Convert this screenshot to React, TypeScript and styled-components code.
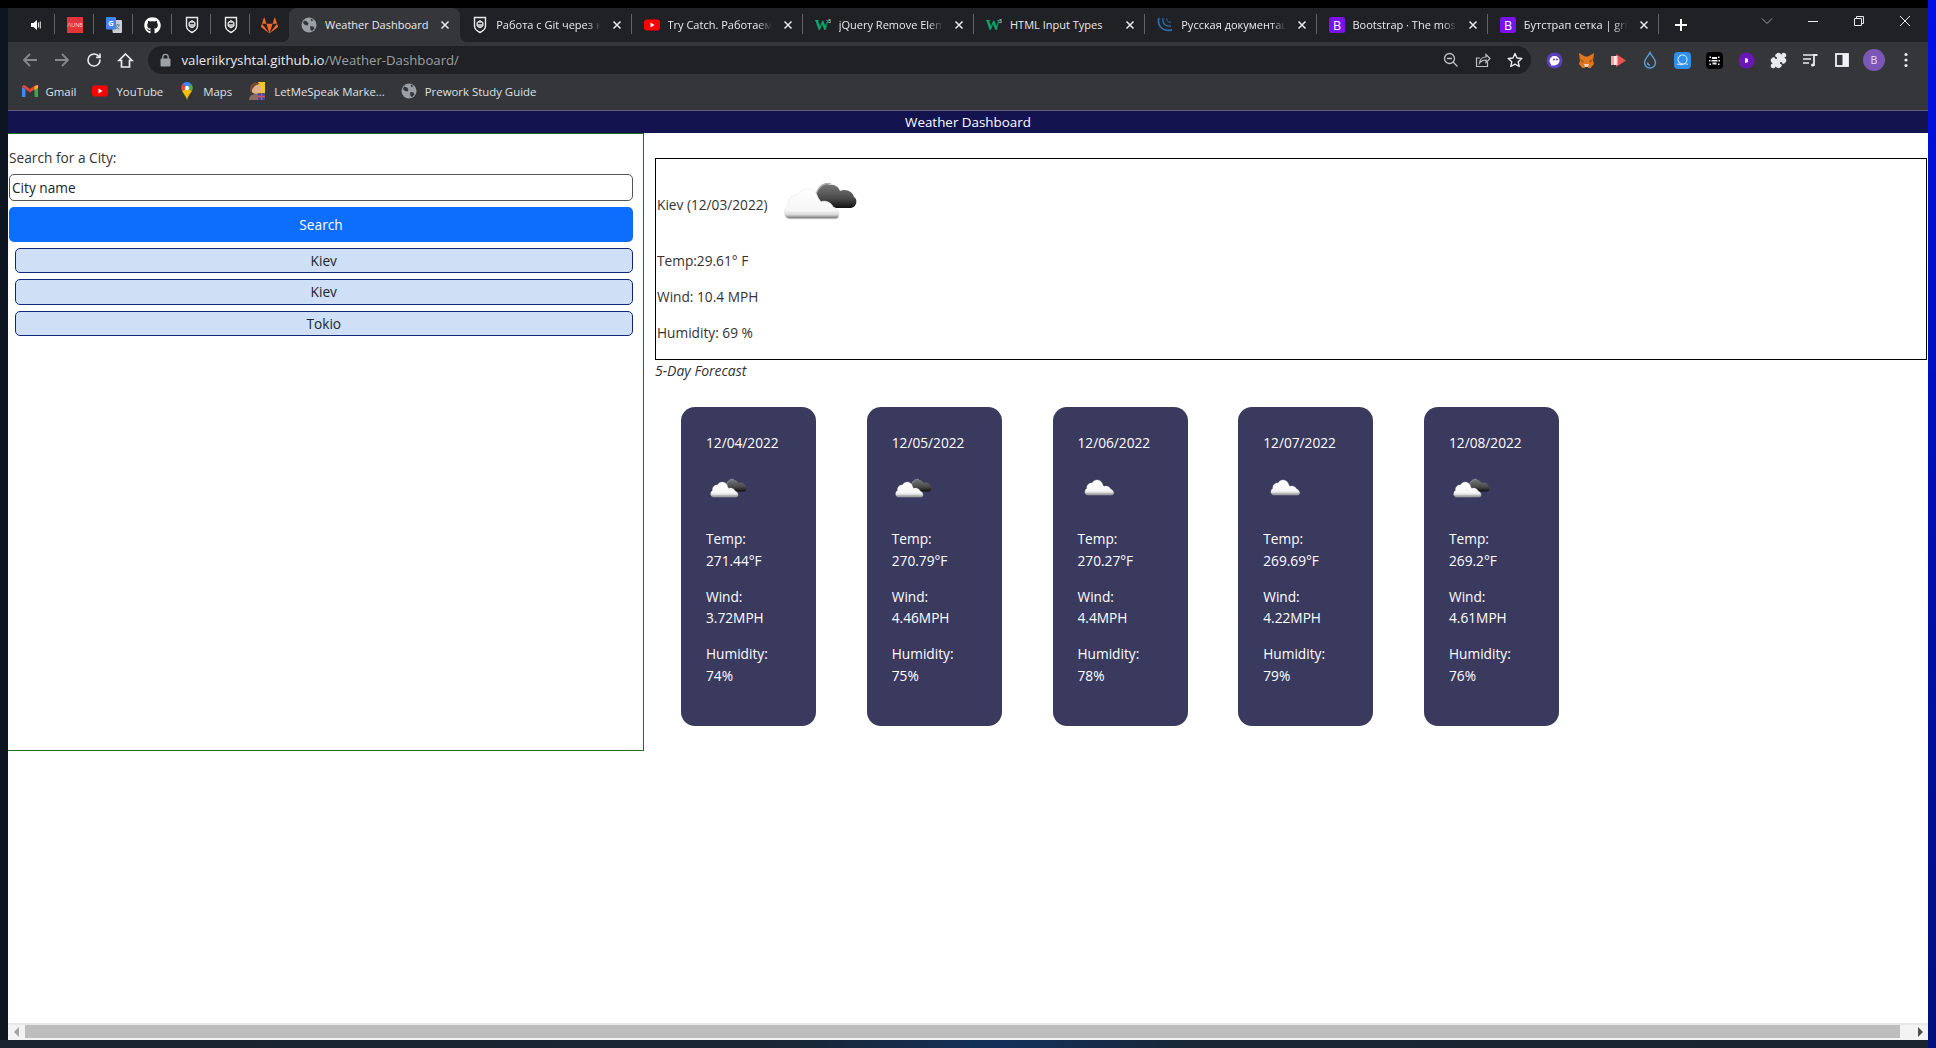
import React from "react";
import styled, { createGlobalStyle } from "styled-components";
import { RotateCw, Puzzle } from "lucide-react";
import { FaGithub, FaGitlab } from "react-icons/fa";

const Global = createGlobalStyle`
  html, body { margin: 0; padding: 0; overflow: hidden; }
  * { box-sizing: border-box; }
`;

const UI = `"Open Sans", "Noto Sans", Arial, sans-serif`;

const Desktop = styled.div`
  width: 1936px;
  height: 1048px;
  padding: 8px 8px 8px 8px;
  font-family: ${UI};
  background:
    linear-gradient(#0010e8, #00107c) right top / 8px 100% no-repeat,
    linear-gradient(#000, #000) left top / 100% 8px no-repeat,
    linear-gradient(90deg, #1a2430 0%, #1a2634 40%, #12305a 52%, #1a2634 62%, #1a2430 100%) left bottom / 100% 8px no-repeat,
    #0c1520;
`;

const Browser = styled.div`
  width: 1920px;
  height: 1032px;
  display: flex;
  flex-direction: column;
  background: #fff;
`;

const TabStrip = styled.div`
  height: 34px;
  flex: none;
  display: flex;
  align-items: stretch;
  background: #202124;
  padding-left: 8px;
  color: #e8eaed;
`;

const PinnedTab = styled.div<{ $sep?: boolean }>`
  position: relative;
  width: 39px;
  flex: none;
  display: flex;
  align-items: center;
  justify-content: center;
  &::after {
    content: "";
    position: absolute;
    right: 0;
    top: 6px;
    height: 20px;
    width: 1px;
    background: ${(p) => (p.$sep === false ? "transparent" : "#5f6368")};
  }
`;

const Tab = styled.div<{ $active?: boolean; $sep?: boolean }>`
  position: relative;
  width: 171.25px;
  flex: none;
  display: flex;
  align-items: center;
  padding: 0 7px 0 12px;
  gap: 8px;
  background: ${(p) => (p.$active ? "#35363a" : "transparent")};
  border-radius: ${(p) => (p.$active ? "8px 8px 0 0" : "0")};
  &::after {
    content: "";
    position: absolute;
    right: 0;
    top: 6px;
    height: 20px;
    width: 1px;
    background: ${(p) => (p.$sep ? "#5f6368" : "transparent")};
  }
`;

const TabFlare = styled.span<{ $side: "left" | "right" }>`
  position: absolute;
  bottom: 0;
  ${(p) => (p.$side === "left" ? "left: -6px;" : "right: -6px;")}
  width: 6px;
  height: 6px;
  background: radial-gradient(
    circle at ${(p) => (p.$side === "left" ? "0 0" : "100% 0")},
    transparent 5.5px,
    #35363a 6px
  );
`;

const TabTitle = styled.span<{ $fade?: boolean }>`
  flex: 1;
  min-width: 0;
  font-size: 11px;
  line-height: 15px;
  padding-bottom: 1px;
  white-space: nowrap;
  overflow: hidden;
  color: #e8eaed;
  ${(p) =>
    p.$fade
      ? `-webkit-mask-image: linear-gradient(90deg, #000 86%, transparent 100%);
         mask-image: linear-gradient(90deg, #000 86%, transparent 100%);`
      : ""}
`;

const TabClose = styled.svg`
  width: 16px;
  height: 16px;
  flex: none;
`;

const NewTab = styled.svg`
  width: 16px;
  height: 16px;
  align-self: center;
  flex: none;
  margin-left: 14px;
`;

const StripSpacer = styled.div`
  flex: 1;
`;

const WinButton = styled.div`
  width: 46px;
  flex: none;
  display: flex;
  justify-content: center;
  padding-top: 7px;
`;

const Toolbar = styled.div`
  height: 36px;
  flex: none;
  display: flex;
  align-items: center;
  padding: 0 6px 0 5.5px;
  background: #35363a;
`;

const ToolButton = styled.div`
  width: 32px;
  height: 28px;
  flex: none;
  display: flex;
  align-items: center;
  justify-content: center;
  color: #e8eaed;
`;

const Omnibox = styled.div`
  flex: 1;
  min-width: 0;
  height: 28px;
  margin: 0 7px 0 6px;
  border-radius: 14px;
  background: #202124;
  display: flex;
  align-items: center;
  padding-left: 10px;
`;

const LockBox = styled.div`
  width: 16px;
  flex: none;
  display: flex;
  justify-content: center;
  margin-right: 8px;
`;

const Url = styled.div`
  flex: 1;
  font-size: 13.2px;
  color: #9aa0a6;
  white-space: nowrap;
`;

const UrlHost = styled.span`
  color: #e8eaed;
`;

const Avatar = styled.div`
  width: 22px;
  height: 22px;
  border-radius: 50%;
  background: #7b58b8;
  color: #e8e0f5;
  font-size: 10.5px;
  display: flex;
  align-items: center;
  justify-content: center;
`;

const Bookmarks = styled.div`
  height: 33px;
  flex: none;
  display: flex;
  align-items: center;
  gap: 16px;
  padding: 0 0 6px 13.5px;
  background: #35363a;
  border-bottom: 1px solid #5c5e78;
`;

const Bookmark = styled.div`
  display: flex;
  align-items: center;
  gap: 8px;
  font-size: 11.4px;
  color: #dfe1e5;
  white-space: nowrap;
`;

const SiteHeader = styled.header`
  height: 22px;
  flex: none;
  background: #13134f;
  color: #fff;
  font-size: 13.4px;
  line-height: 22px;
  text-align: center;
`;

const Main = styled.main`
  flex: 1;
  min-height: 0;
  display: flex;
  align-items: flex-start;
  color: #212529;
  font-size: 13.7px;
`;

const SearchPanel = styled.aside`
  width: 636px;
  height: 618px;
  flex: none;
  border: 1px solid #1c6b1f;
  border-left: 0;
  padding: 13px 10px 0 1px;
`;

const SearchLabel = styled.div`
  line-height: 21.6px;
  margin-bottom: 5px;
  color: #333;
`;

const CityInput = styled.input`
  display: block;
  width: 100%;
  height: 27px;
  border: 1px solid #555;
  border-radius: 5px;
  padding: 0 2px;
  font: inherit;
  color: #212529;
  outline: none;
  &::placeholder {
    color: #212529;
    opacity: 1;
  }
`;

const SearchButton = styled.button`
  display: block;
  width: 100%;
  height: 35px;
  margin-top: 6px;
  border: 0;
  border-radius: 5px;
  background: #0d6efd;
  color: #fff;
  font: inherit;
`;

const HistoryList = styled.div`
  display: flex;
  flex-direction: column;
  gap: 6px;
  margin-top: 6px;
  padding-left: 5.5px;
`;

const HistoryButton = styled.button`
  height: 25.5px;
  border: 1px solid #12277a;
  border-radius: 5px;
  background: #cfe0f6;
  color: #212529;
  font: inherit;
  padding: 0;
`;

const Content = styled.section`
  flex: 1;
  min-width: 0;
  padding: 25px 1px 0 11px;
`;

const CurrentBox = styled.div`
  border: 1px solid #000;
  padding-left: 1px;
  height: 201.5px;
  color: #333;
`;

const TitleRow = styled.div`
  height: 91px;
  display: flex;
  align-items: center;
  padding-bottom: 1px;
`;

const BigCloud = styled.svg`
  width: 90px;
  height: 55px;
  margin: 0 0 3px 7px;
  flex: none;
`;

const Stat = styled.p`
  margin: 0 0 14.4px;
  line-height: 21.6px;
`;

const ForecastLabel = styled.div`
  font-style: italic;
  font-size: 14px;
  line-height: 21.6px;
  color: #333;
`;

const CardRow = styled.div`
  display: flex;
  gap: 50.75px;
  margin: 26px 0 0 26px;
`;

const Card = styled.article`
  width: 135px;
  height: 319px;
  flex: none;
  border-radius: 14px;
  background: #3a3a5f;
  color: #fff;
  padding: 25px;
`;

const CardDate = styled.div`
  line-height: 21.6px;
`;

const SmallCloud = styled.svg`
  display: block;
  width: 45px;
  height: 27.5px;
  margin: 21.7px 0 25.2px -0.5px;
`;

const CardStat = styled.p`
  margin: 0 0 14.4px;
  line-height: 21.6px;
`;

const ScrollBar = styled.div`
  height: 17px;
  flex: none;
  display: flex;
  align-items: stretch;
  background: linear-gradient(#e9e9e9 2px, #f3f3f3 2px);
`;

const ScrollArrow = styled.div`
  width: 17px;
  flex: none;
  display: flex;
  align-items: center;
  justify-content: center;
`;

const ScrollThumb = styled.div`
  flex: 1;
  margin: 2px 11px 2px 0;
  background: #bdbdbd;
`;

const Cloud = ({ dark }: { dark: boolean }) => (
  <>
    <defs>
      <linearGradient id="whiteCloud" x1="0" y1="0" x2="0" y2="1">
        <stop offset="0" stopColor="#fff" />
        <stop offset="0.72" stopColor="#f6f6f6" />
        <stop offset="0.86" stopColor="#d6d6d6" />
        <stop offset="0.95" stopColor="#8a8a8a" />
        <stop offset="1" stopColor="#b0b0b0" />
      </linearGradient>
      <linearGradient id="darkCloud" x1="0" y1="0" x2="0" y2="1">
        <stop offset="0" stopColor="#777" />
        <stop offset="0.6" stopColor="#4a4a4a" />
        <stop offset="1" stopColor="#111" />
      </linearGradient>
    </defs>
    {dark && (
      <>
        <path
          d="M41 20C43 11 50 7 55 10C60 9 64 13 65 16C71 13 78 17 79 22C83 24 82 32 76 33L56 33C48 30 44 24 41 20Z"
          fill="url(#darkCloud)"
        />
        <path d="M41 20C43 11 50 7 56 9" fill="none" stroke="#aaa" strokeWidth="1.4" />
      </>
    )}
    <g transform={dark ? undefined : "translate(6 -4) scale(1.05 1)"}>
      <path
        d="M15 44C9 44 7 35 13 31C12 23 19 19 23 20C27 12 38 12 42 20C44 25 44 26 46 27C50 24 58 29 58 32C64 33 67 44 60 44Z"
        fill="url(#whiteCloud)"
        stroke="#e4e4e4"
        strokeWidth="0.6"
      />
    </g>
  </>
);

const BigCloudIcon = () => (
  <BigCloud viewBox="0 0 90 55">
    <Cloud dark />
  </BigCloud>
);

const SmallCloudIcon = ({ dark }: { dark: boolean }) => (
  <SmallCloud viewBox="0 0 90 55">
    <Cloud dark={dark} />
  </SmallCloud>
);

const CloseX = () => (
  <TabClose viewBox="0 0 16 16">
    <path d="M4.5 4.5l7 7M11.5 4.5l-7 7" stroke="#e8eaed" strokeWidth="1.5" fill="none" />
  </TabClose>
);

const Shield = () => (
  <svg width="16" height="18" viewBox="0 0 16 18">
    <path d="M2.5 1.500h11V10c0 3-2.500 5-5.500 6.500C5 15 2.500 13 2.500 10z" fill="#222" stroke="#e8eaed" strokeWidth="1.400" />
    <path d="M5 6.500L8 4.500l3 2v3.500L8 12 5 10z" fill="#bdbdbd" stroke="#e8eaed" strokeWidth="1" />
    <path d="M6 7.500h4" stroke="#222" strokeWidth="1.200" />
  </svg>
);

const Globe = ({ c = "#9aa0a6" }: { c?: string }) => (
  <svg width="16" height="16" viewBox="0 0 16 16">
    <circle cx="8" cy="8" r="7.5" fill={c} />
    <path d="M3 3.5l3 1 1.5 2-1 2-2.5-.5L2 6zM9 9l3.500.5 1 2L11 14 9.500 13zM9.500 1.500l3 1.500-2 1.500z" fill="#35363a" />
  </svg>
);

const W3 = () => (
  <svg width="16" height="16" viewBox="0 0 16 16">
    <text x="-0.5" y="13" fontFamily="Liberation Serif, serif" fontWeight="700" fontSize="15" fill="#04aa6d">W</text>
    <text x="13" y="6" fontFamily="Liberation Sans, sans-serif" fontSize="5" fill="#e8eaed">3</text>
  </svg>
);

const YouTube = () => (
  <svg width="16" height="16" viewBox="0 0 16 16">
    <rect x="0" y="2.5" width="16" height="11" rx="3" fill="#f00" />
    <path d="M6.5 5.5l4 2.5-4 2.5z" fill="#fff" />
  </svg>
);

const BootstrapIcon = () => (
  <svg width="16" height="16" viewBox="0 0 16 16">
    <rect width="16" height="16" rx="2.5" fill="#7a12ee" />
    <text x="8" y="12.5" textAnchor="middle" fontFamily="Open Sans, sans-serif" fontSize="12.5" fill="#fff">B</text>
  </svg>
);

const JQuery = () => (
  <svg width="16" height="16" viewBox="0 0 16 16" fill="none" stroke="#2f6aa8">
    <path d="M2 1C0 7 4 15 15 13" strokeWidth="1.8" />
    <path d="M6 1C5 6 8 10 14 9" strokeWidth="1.3" />
    <path d="M10 1C9 3.5 11 6 14 5" strokeWidth="1" />
  </svg>
);

const Gmail = () => (
  <svg width="16" height="14" viewBox="0 0 16 14">
    <path d="M0 2.5V13h3.5V5.5z" fill="#4285f4" />
    <path d="M16 2.5V13h-3.5V5.5z" fill="#34a853" />
    <path d="M0 2.5L8 8.5 16 2.5 14 .8 8 5 2 .8z" fill="#ea4335" />
    <path d="M12.5 2.8L16 .8v3l-3.5 2.5z" fill="#fbbc04" />
  </svg>
);

const MapsPin = () => (
  <svg width="16" height="18" viewBox="0 0 16 18">
    <path d="M8 0a5.800 5.800 0 0 0-4.500 2.100L8 6l4.500-3.800A5.800 5.800 0 0 0 8 0z" fill="#4285f4" />
    <path d="M3.500 2.100A6 6 0 0 0 2.200 6c0 1.200.3 2 .8 3L8 6z" fill="#ea4335" />
    <path d="M12.500 2.200A6 6 0 0 1 13.800 6c0 1.200-.5 2.300-1 3.200L8 6z" fill="#4caf50" />
    <path d="M3 9l5-3 4.800 3.200C11 12 8.800 14 8 18c-.8-4-3.500-6-5-9z" fill="#fbbc04" />
    <circle cx="8" cy="6" r="2.2" fill="#fff" />
  </svg>
);

const LetMeSpeak = () => (
  <svg width="18" height="20" viewBox="0 0 18 20">
    <rect x="10" y="1" width="7" height="13" fill="#f3c623" />
    <circle cx="8" cy="8" r="5" fill="#e2b08f" />
    <path d="M2 8C2 2 8 0 12 3C9 3 6 5 4 9L3 14z" fill="#7a4a32" />
    <path d="M1 19c0-4 3-6 7-6s6 2 6 6z" fill="#8a6a62" />
    <rect x="10" y="12" width="7" height="7" rx="1" fill="#3a4ea8" />
    <path d="M13.5 12v7M10 15.5h7" stroke="#e34a5a" strokeWidth="1.5" />
  </svg>
);

const Translate = () => (
  <svg width="16" height="16" viewBox="0 0 16 16">
    <rect x="6.5" y="3" width="9.5" height="13" rx="1" fill="#c9ced6" />
    <path d="M9 8h5M11.500 7v1.500M13 8c-.5 2-2 3.500-3.500 4M10 9c.5 1.500 2 3 3.500 3" stroke="#7c8694" strokeWidth="1" fill="none" />
    <rect x="0" y="0" width="10" height="12.5" rx="1" fill="#4285f4" />
    <text x="5" y="9" textAnchor="middle" fontFamily="Open Sans, sans-serif" fontWeight="700" fontSize="7.5" fill="#fff">G</text>
  </svg>
);

const UnbIcon = () => (
  <svg width="16" height="16" viewBox="0 0 16 16">
    <rect width="16" height="16" fill="#e2343f" />
    <text x="8" y="10" textAnchor="middle" fontFamily="Open Sans, sans-serif" fontSize="5.5" fill="#fbd5d8">/\UNB</text>
  </svg>
);

const Sound = () => (
  <svg width="16" height="16" viewBox="0 0 16 16">
    <path d="M3 6h2.500L9 3v10l-3.500-3H3z" fill="#fff" />
    <path d="M10.500 5.500v5M12.300 4.500v7" stroke="#ddd" strokeWidth="1.1" />
  </svg>
);

const ArrowIcon = ({ dir }: { dir: "l" | "r" }) => (
  <svg width="16" height="16" viewBox="0 0 16 16" fill="none" stroke="#85888c" strokeWidth="1.8">
    {dir === "l" ? <path d="M15 8H2M8 2L2 8l6 6" /> : <path d="M1 8h13M8 2l6 6-6 6" />}
  </svg>
);

const HomeIcon = () => (
  <svg width="17" height="17" viewBox="0 0 17 17" fill="none" stroke="#e8eaed" strokeWidth="1.7">
    <path d="M8.500 2L15 8.500h-2.500V15h-8V8.500H2z" strokeLinejoin="miter" />
  </svg>
);

const LockIcon = () => (
  <svg width="11" height="14" viewBox="0 0 11 14">
    <path d="M2.800 6V4a2.700 2.700 0 0 1 5.400 0v2" fill="none" stroke="#9aa0a6" strokeWidth="1.3" />
    <rect x="0.5" y="5.5" width="10" height="8" rx="1" fill="#9aa0a6" />
  </svg>
);

const ZoomOutIcon = () => (
  <svg width="16" height="16" viewBox="0 0 16 16" fill="none" stroke="#bdc1c6" strokeWidth="1.3">
    <circle cx="6.5" cy="6.5" r="5" />
    <path d="M4 6.500h5M10 10l4.500 4.500" />
  </svg>
);

const ShareIcon = () => (
  <svg width="16" height="16" viewBox="0 0 16 16" fill="none" stroke="#bdc1c6" strokeWidth="1.2">
    <path d="M12.500 10v4.500h-11V6H5" />
    <path d="M4.500 11c.5-4 3-6 6.500-6V2.500l4 4-4 4V8c-3 0-5 1-6.500 3z" />
  </svg>
);

const StarIcon = () => (
  <svg width="16" height="16" viewBox="0 0 16 16" fill="none" stroke="#e8eaed" strokeWidth="1.4">
    <path d="M8 1.500l2 4.500 4.800.5-3.600 3.200 1 4.800L8 12.100l-4.200 2.400 1-4.800L1.200 6.500 6 6z" strokeLinejoin="round" />
  </svg>
);

const ExtGhost = () => (
  <svg width="17" height="17" viewBox="0 0 17 17">
    <circle cx="8.5" cy="8.5" r="8" fill="#5b3fc0" />
    <path d="M3.500 9c0-3 2.500-5 5-5s5 2 5 4.500c0 3-3 5-6 5H5C6 12.500 3.500 11 3.500 9z" fill="#fff" />
    <circle cx="8" cy="7.5" r="1" fill="#5b3fc0" />
    <circle cx="11" cy="7.5" r="1" fill="#5b3fc0" />
  </svg>
);

const ExtFox = () => (
  <svg width="17" height="17" viewBox="0 0 17 17">
    <path d="M1 1l6 3.500h3L16 1l-1 8 1 3-3.500 4H4.500L1 12l1-3z" fill="#e2761b" />
    <path d="M1 6l5 3-1.500 2zM16 6l-5 3 1.500 2z" fill="#a8571a" />
    <path d="M6 12h5l-1 3H7z" fill="#e4d4c4" />
    <path d="M7 15h3v1.500H7z" fill="#333" />
  </svg>
);

const ExtPlay = () => (
  <svg width="17" height="17" viewBox="0 0 17 17">
    <path d="M1 4h6v9H1z" fill="#f5a0a0" />
    <path d="M6 2l10 6.500L6 15z" fill="#ef5350" />
    <path d="M4 4h3.500v9H4z" fill="#fff" opacity=".8" />
  </svg>
);

const ExtDrop = () => (
  <svg width="14" height="18" viewBox="0 0 14 18" fill="none" stroke="#5aa0d8" strokeWidth="1.4">
    <path d="M7 1.500C5 6 1.500 8 1.500 11.500a5.500 5.500 0 0 0 11 0C12.500 8 9 6 7 1.500z" />
    <path d="M4.500 11.500A2.500 2.500 0 0 0 7 14" />
  </svg>
);

const ExtOcean = () => (
  <svg width="17" height="17" viewBox="0 0 17 17">
    <rect width="17" height="17" rx="4" fill="#2f8fe8" />
    <circle cx="8.5" cy="7.5" r="4.5" fill="none" stroke="#cfe8ff" strokeWidth="1.1" />
    <path d="M3 12.500c2-1.500 3.500 1 5.500 0s3.500-1 5.500 0" fill="none" stroke="#cfe8ff" strokeWidth="1.1" />
  </svg>
);

const ExtBug = () => (
  <svg width="17" height="17" viewBox="0 0 17 17">
    <rect width="17" height="17" rx="4" fill="#000" />
    <path d="M6 5h5v2H6zM5.500 8h6v1.500h-6zM6.500 10.500h4v2h-4zM3.500 4.500h1.500v1.500H3.500zM12 4.500h1.500v1.500H12zM3 8h1.500v1.500H3zM12.500 8H14v1.500h-1.500zM3.500 11.500H5V13H3.500zM12 11.500h1.500V13H12z" fill="#eee" />
  </svg>
);

const ExtCircle = () => (
  <svg width="17" height="17" viewBox="0 0 17 17">
    <circle cx="8.5" cy="8.5" r="8" fill="#6a16b8" />
    <path d="M7 6l3 .8v3.400L7 11z" fill="#f0e6ff" />
  </svg>
);

const MediaIcon = () => (
  <svg width="17" height="16" viewBox="0 0 17 16" fill="none" stroke="#e8eaed" strokeWidth="1.5">
    <path d="M1 3h11M1 7h8M1 11h6" />
    <path d="M12 14V3h3.500" strokeWidth="1.8" />
    <circle cx="10.5" cy="13" r="1.5" fill="#e8eaed" stroke="none" />
  </svg>
);

const SidePanelIcon = () => (
  <svg width="14" height="14" viewBox="0 0 14 14">
    <rect x="1" y="1" width="12" height="12" fill="none" stroke="#f1f3f4" strokeWidth="1.8" />
    <rect x="7.5" y="1" width="5.5" height="12" fill="#f1f3f4" />
  </svg>
);

const DotsIcon = () => (
  <svg width="4" height="16" viewBox="0 0 4 16" fill="#e8eaed">
    <circle cx="2" cy="2.5" r="1.6" />
    <circle cx="2" cy="8" r="1.6" />
    <circle cx="2" cy="13.5" r="1.6" />
  </svg>
);

const tabs = [
  { title: "Работа с Git через к", icon: <Shield />, fade: true },
  { title: "Try Catch. Работаем", icon: <YouTube />, fade: true },
  { title: "jQuery Remove Elem", icon: <W3 />, fade: true },
  { title: "HTML Input Types", icon: <W3 />, fade: false },
  { title: "Русская документац", icon: <JQuery />, fade: true },
  { title: "Bootstrap · The most", icon: <BootstrapIcon />, fade: true },
  { title: "Бутстрап сетка | grid", icon: <BootstrapIcon />, fade: true },
];

const forecast = [
  { date: "12/04/2022", dark: true, temp: "271.44°F", wind: "3.72MPH", hum: "74%" },
  { date: "12/05/2022", dark: true, temp: "270.79°F", wind: "4.46MPH", hum: "75%" },
  { date: "12/06/2022", dark: false, temp: "270.27°F", wind: "4.4MPH", hum: "78%" },
  { date: "12/07/2022", dark: false, temp: "269.69°F", wind: "4.22MPH", hum: "79%" },
  { date: "12/08/2022", dark: true, temp: "269.2°F", wind: "4.61MPH", hum: "76%" },
];

export default function App() {
  return (
    <Desktop>
      <Global />
      <Browser>
        <TabStrip>
          <PinnedTab><Sound /></PinnedTab>
          <PinnedTab><UnbIcon /></PinnedTab>
          <PinnedTab><Translate /></PinnedTab>
          <PinnedTab><FaGithub size={17} color="#fff" /></PinnedTab>
          <PinnedTab><Shield /></PinnedTab>
          <PinnedTab><Shield /></PinnedTab>
          <PinnedTab $sep={false}><FaGitlab size={17} color="#f4692a" /></PinnedTab>
          <Tab $active>
            <TabFlare $side="left" />
            <Globe />
            <TabTitle>Weather Dashboard</TabTitle>
            <CloseX />
            <TabFlare $side="right" />
          </Tab>
          {tabs.map((t) => (
            <Tab key={t.title} $sep>
              {t.icon}
              <TabTitle $fade={t.fade}>{t.title}</TabTitle>
              <CloseX />
            </Tab>
          ))}
          <NewTab viewBox="0 0 16 16">
            <path d="M8 2v12M2 8h12" stroke="#fff" strokeWidth="2" />
          </NewTab>
          <StripSpacer />
          <WinButton>
            <svg width="12" height="12" viewBox="0 0 12 12" fill="none" stroke="#9aa0a6">
              <path d="M1 3.500l5 5 5-5" />
            </svg>
          </WinButton>
          <WinButton>
            <svg width="12" height="12" viewBox="0 0 12 12" stroke="#e8eaed">
              <path d="M1 6.500h10" />
            </svg>
          </WinButton>
          <WinButton>
            <svg width="12" height="12" viewBox="0 0 12 12" fill="none" stroke="#e8eaed">
              <path d="M1.500 3.500h7v7h-7zM3.500 3.500v-2h7v7h-2" />
            </svg>
          </WinButton>
          <WinButton>
            <svg width="12" height="12" viewBox="0 0 12 12" stroke="#e8eaed">
              <path d="M1 1l10 10M11 1L1 11" />
            </svg>
          </WinButton>
        </TabStrip>
        <Toolbar>
          <ToolButton><ArrowIcon dir="l" /></ToolButton>
          <ToolButton><ArrowIcon dir="r" /></ToolButton>
          <ToolButton><RotateCw size={16} strokeWidth={2.4} color="#e8eaed" /></ToolButton>
          <ToolButton><HomeIcon /></ToolButton>
          <Omnibox>
            <LockBox><LockIcon /></LockBox>
            <Url><UrlHost>valeriikryshtal.github.io</UrlHost>/Weather-Dashboard/</Url>
            <ToolButton><ZoomOutIcon /></ToolButton>
            <ToolButton><ShareIcon /></ToolButton>
            <ToolButton><StarIcon /></ToolButton>
          </Omnibox>
          <ToolButton><ExtGhost /></ToolButton>
          <ToolButton><ExtFox /></ToolButton>
          <ToolButton><ExtPlay /></ToolButton>
          <ToolButton><ExtDrop /></ToolButton>
          <ToolButton><ExtOcean /></ToolButton>
          <ToolButton><ExtBug /></ToolButton>
          <ToolButton><ExtCircle /></ToolButton>
          <ToolButton><Puzzle size={17} fill="#e8eaed" color="#e8eaed" /></ToolButton>
          <ToolButton><MediaIcon /></ToolButton>
          <ToolButton><SidePanelIcon /></ToolButton>
          <ToolButton><Avatar>B</Avatar></ToolButton>
          <ToolButton><DotsIcon /></ToolButton>
        </Toolbar>
        <Bookmarks>
          <Bookmark><Gmail />Gmail</Bookmark>
          <Bookmark><YouTube />YouTube</Bookmark>
          <Bookmark><MapsPin />Maps</Bookmark>
          <Bookmark><LetMeSpeak />LetMeSpeak Marke...</Bookmark>
          <Bookmark><Globe />Prework Study Guide</Bookmark>
        </Bookmarks>
        <SiteHeader>Weather Dashboard</SiteHeader>
        <Main>
          <SearchPanel>
            <SearchLabel>Search for a City:</SearchLabel>
            <CityInput placeholder="City name" />
            <SearchButton>Search</SearchButton>
            <HistoryList>
              <HistoryButton>Kiev</HistoryButton>
              <HistoryButton>Kiev</HistoryButton>
              <HistoryButton>Tokio</HistoryButton>
            </HistoryList>
          </SearchPanel>
          <Content>
            <CurrentBox>
              <TitleRow>
                Kiev (12/03/2022)
                <BigCloudIcon />
              </TitleRow>
              <Stat>Temp:29.61° F</Stat>
              <Stat>Wind: 10.4 MPH</Stat>
              <Stat>Humidity: 69 %</Stat>
            </CurrentBox>
            <ForecastLabel>5-Day Forecast</ForecastLabel>
            <CardRow>
              {forecast.map((d) => (
                <Card key={d.date}>
                  <CardDate>{d.date}</CardDate>
                  <SmallCloudIcon dark={d.dark} />
                  <CardStat>Temp:<br />{d.temp}</CardStat>
                  <CardStat>Wind:<br />{d.wind}</CardStat>
                  <CardStat>Humidity:<br />{d.hum}</CardStat>
                </Card>
              ))}
            </CardRow>
          </Content>
        </Main>
        <ScrollBar>
          <ScrollArrow>
            <svg width="8" height="10" viewBox="0 0 8 10"><path d="M6 0v10L1 5z" fill="#a3a3a3" /></svg>
          </ScrollArrow>
          <ScrollThumb />
          <ScrollArrow>
            <svg width="8" height="10" viewBox="0 0 8 10"><path d="M2 0v10l5-5z" fill="#505050" /></svg>
          </ScrollArrow>
        </ScrollBar>
      </Browser>
    </Desktop>
  );
}
